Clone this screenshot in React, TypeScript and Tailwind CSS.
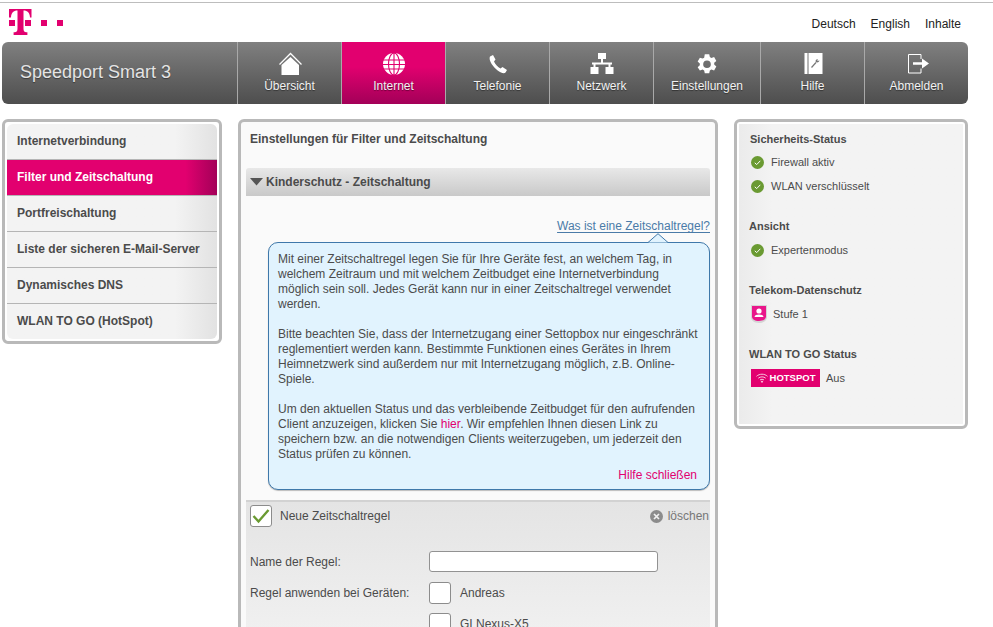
import React from "react";

const navShadow = "[text-shadow:0_1px_1px_rgba(0,0,0,0.45)]";

function HomeIcon() {
  return (
    <svg width="24" height="24" viewBox="0 0 24 24" fill="#fff">
      <path d="M3.500 13 12.500 5l8.500 8v10H3.500z" />
      <path d="M1.500 12.500 12.500 1.500l11 11" fill="none" stroke="#fff" strokeWidth="1.300" />
    </svg>
  );
}
function GlobeIcon() {
  return (
    <svg width="24" height="24" viewBox="0 0 24 24">
      <circle cx="12" cy="12" r="11" fill="#fff" />
      <g stroke="#e2006f" strokeWidth="1.100" fill="none">
        <path d="M1 8h22M1 12.500h22M1 17h22M12 1v22" />
        <ellipse cx="12" cy="12" rx="5.500" ry="11" />
      </g>
    </svg>
  );
}
function PhoneIcon() {
  return (
    <svg width="24" height="24" viewBox="0 0 24 24" fill="#fff">
      <path d="M4 4.500 7 3l2.500 4.500L8 9.500c1 2.500 4 5.500 6.500 7l2-1.500 4.500 3-1.500 2.500c-1 1-2.500 1-4.500 0C10 18 5.500 13 4 8.500c-.5-1.500-.5-3 0-4z" />
    </svg>
  );
}
function NetworkIcon() {
  return (
    <svg width="24" height="24" viewBox="0 -1 24 24" fill="#fff">
      <rect x="8" y="0" width="8" height="6" />
      <rect x="11" y="6" width="2" height="4" />
      <rect x="2" y="9.500" width="20" height="2" />
      <rect x="3.500" y="11" width="2" height="3.500" />
      <rect x="18.500" y="11" width="2" height="3.500" />
      <rect x="0.500" y="14" width="8" height="7" />
      <rect x="15.500" y="14" width="8" height="7" />
    </svg>
  );
}
function GearIcon() {
  return (
    <svg width="24" height="24" viewBox="-1.500 -1.500 27 27">
      <path
        fillRule="evenodd"
        fill="#fff"
        d="M9.500 1h5l.7 3.200 1.700 1 3.100-1 2.500 4.300-2.400 2.200v2l2.400 2.200-2.500 4.300-3.100-1-1.700 1-.7 3.200h-5l-.7-3.200-1.700-1-3.100 1L1.500 15.600l2.400-2.200v-2L1.500 9.200 4 4.900l3.100 1 1.700-1zM12 8a4.300 4.300 0 1 0 0 8.600A4.300 4.300 0 0 0 12 8z"
      />
    </svg>
  );
}
function HelpIcon() {
  return (
    <svg width="24" height="24" viewBox="0 0 24 24">
      <rect x="3.500" y="1" width="3" height="21" fill="#fff" />
      <rect x="7.500" y="1" width="14" height="21" fill="#fff" />
      <path d="M10.500 15.500 15 10.500" stroke="#777" strokeWidth="1.200" />
      <path d="M14.500 9.500c0-1.500 1-2.500 2.500-2.500l-.8 1.300.8.800 1.300-.8c.2 1.400-1 2.500-2.800 2.200z" fill="#777" />
    </svg>
  );
}
function LogoutIcon() {
  return (
    <svg width="24" height="24" viewBox="0 0 24 24" fill="none">
      <path d="M16 7V2.500H3.500V21H16v-4.500" stroke="#fff" strokeWidth="1" />
      <path d="M8 10.300h9V6.500l7 5-7 5v-3.700H8z" fill="#fff" />
    </svg>
  );
}

const navItems = [
  { label: "Übersicht", w: "w-[104px]", icon: <HomeIcon /> },
  { label: "Internet", w: "w-[104px]", icon: <GlobeIcon />, active: true },
  { label: "Telefonie", w: "w-[104px]", icon: <PhoneIcon /> },
  { label: "Netzwerk", w: "w-[104px]", icon: <NetworkIcon /> },
  { label: "Einstellungen", w: "w-[107px]", icon: <GearIcon /> },
  { label: "Hilfe", w: "w-[104px]", icon: <HelpIcon /> },
  { label: "Abmelden", w: "w-[104px]", icon: <LogoutIcon /> },
];

function CheckDot() {
  return (
    <svg width="13" height="13" viewBox="0 0 13 13" className="shrink-0">
      <circle cx="6.500" cy="6.500" r="6.500" fill="#6a9a32" />
      <path d="M3.800 6.800 5.700 8.600 9.300 4.800" stroke="#fff" strokeWidth="1" fill="none" />
    </svg>
  );
}

function Status({ children }: { children: React.ReactNode }) {
  return (
    <div className="flex items-center h-[24px] pl-[12px] gap-[7px] text-[11px]">
      <CheckDot />
      <span>{children}</span>
    </div>
  );
}

function H({ children, className = "" }: { children: React.ReactNode; className?: string }) {
  return <div className={`font-bold text-[11px] text-[#4b4b4b] leading-[15px] pl-[10px] ${className}`}>{children}</div>;
}

const menu = ["Internetverbindung", "Filter und Zeitschaltung", "Portfreischaltung", "Liste der sicheren E-Mail-Server", "Dynamisches DNS", "WLAN TO GO (HotSpot)"];

export default function App() {
  return (
    <div className="w-[993px] h-[627px] overflow-hidden bg-white text-[12px] text-[#4b4b4b] [font-family:'Liberation_Sans',Arial,sans-serif]">
      <div className="h-[3px] border-b border-[#bdbdbd]" />
      {/* top strip */}
      <div className="h-[39px] w-[968px] flex items-start justify-between">
        <svg width="56" height="28" viewBox="0 0 56 28" className="ml-[9px] mt-[6px]" fill="#e2006f">
          <path d="M0 0h22.500v8.500h-1.500C20.800 4 18.600 1.600 14.500 1.600V19c0 3 .6 4.300 3.600 4.300h.3V26H4.600v-2.700h.3c3 0 3.600-1.300 3.600-4.300V1.600C4.400 1.600 2.200 4 2 8.500H0z" />
          <rect x="0" y="11" width="6" height="6" />
          <rect x="16" y="11" width="6" height="6" />
          <rect x="32" y="11" width="6" height="6" />
          <rect x="48" y="11" width="6" height="6" />
        </svg>
        <div className="flex gap-[15px] mt-[14px] mr-[7px] text-[#222] leading-[14px]">
          <span>Deutsch</span>
          <span>English</span>
          <span>Inhalte</span>
        </div>
      </div>
      {/* nav */}
      <div className="ml-[2px] w-[966px] h-[62px] flex rounded-[6px] overflow-hidden bg-gradient-to-b from-[#808080] to-[#4e4e4e]">
        <div className="w-[235px] flex items-center pl-[18px] pb-[2px] text-[18px] text-[#e4e4e4] [text-shadow:0_1px_1px_rgba(0,0,0,0.4)]">Speedport Smart 3</div>
        {navItems.map((n) => (
          <div
            key={n.label}
            className={`${n.w} flex flex-col items-center border-l border-[#a9a9a9] pt-[10px] ${n.active ? "bg-gradient-to-b from-[#e2006f] from-40% to-[#a30058]" : ""}`}
          >
            <div className="h-[25px] flex items-start justify-center">{n.icon}</div>
            <div className={`mt-[2px] leading-[14px] text-[#f2f2f2] ${navShadow}`}>{n.label}</div>
          </div>
        ))}
      </div>
      {/* columns */}
      <div className="flex items-start mt-[15px] ml-[2px]">
        {/* left */}
        <div className="w-[220px] h-[225px] shrink-0 border-[3px] border-[#b9b9b9] rounded-[6px] p-[2px] bg-white">
          <div className="h-full rounded-[6px] overflow-hidden bg-gradient-to-r from-[#f3f3f3] from-80% to-[#e2e2e2]">
            {menu.map((m, i) => (
              <div
                key={m}
                className={`h-[36px] flex items-center pl-[10px] pb-[2px] font-bold ${i === 1 ? "bg-gradient-to-r from-[#e2006f] from-85% to-[#a30058] text-white" : ""} ${i < 5 ? "border-b border-[#b5b5b5]" : ""}`}
              >
                {m}
              </div>
            ))}
          </div>
        </div>
        {/* main */}
        <div className="ml-[16px] w-[480px] h-[600px] shrink-0 border-[3px] border-b-0 border-[#b9b9b9] rounded-t-[6px] bg-[#fafafa] px-[5px]">
          <div className="pl-[4px] pt-[10px] h-[46px] font-bold leading-[15px]">Einstellungen für Filter und Zeitschaltung</div>
          <div className="h-[28px] flex items-center rounded-t-[3px] bg-gradient-to-b from-[#e8e8e8] to-[#c9c9c9] pl-[4px] font-bold">
            <svg width="13" height="8" viewBox="0 0 13 8" className="mr-[3px]">
              <path d="M0 0h13L6.500 7.500z" fill="#555" />
            </svg>
            Kinderschutz - Zeitschaltung
          </div>
          <div className="mt-[23px] h-[15px] leading-[15px] text-right text-[#4a7ba8] underline underline-offset-2">Was ist eine Zeitschaltregel?</div>
          <div className="relative mt-[8px] ml-[22px] w-[442px] h-[248px] rounded-[10px] border border-[#3f78aa] bg-[#e1f3fe] shadow-[0_1px_1px_rgba(0,0,0,0.25)] pl-[9px] pr-[7px] pt-[9px] leading-[15px]">
            <svg width="20" height="10" viewBox="0 0 20 10" className="absolute top-[-10px] right-[41px]">
              <path d="M0 9.500 10 .7l10 8.800" fill="#e1f3fe" stroke="#3f78aa" />
            </svg>
            <p>
              Mit einer Zeitschaltregel legen Sie für Ihre Geräte fest, an welchem Tag, in welchem Zeitraum und mit welchem Zeitbudget eine Internetverbindung möglich sein soll. Jedes Gerät kann nur in einer Zeitschaltregel verwendet werden.
            </p>
            <p className="mt-[15px]">
              Bitte beachten Sie, dass der Internetzugang einer Settopbox nur eingeschränkt reglementiert werden kann. Bestimmte Funktionen eines Gerätes in Ihrem Heimnetzwerk sind außerdem nur mit Internetzugang möglich, z.B. Online-Spiele.
            </p>
            <p className="mt-[15px]">
              Um den aktuellen Status und das verbleibende Zeitbudget für den aufrufenden Client anzuzeigen, klicken Sie <span className="text-[#e2006f]">hier</span>. Wir empfehlen Ihnen diesen Link zu speichern bzw. an die notwendigen Clients weiterzugeben, um jederzeit den Status prüfen zu können.
            </p>
            <div className="mt-[6px] pr-[5px] text-right text-[#e2006f]">Hilfe schließen</div>
          </div>
          <div className="mt-[10px] h-[130px] border-t-2 border-[#d2d2d2] bg-gradient-to-b from-[#e4e4e4] to-[#f0f0f0] pl-[4px] pr-[1px] pt-[3px]">
            <div className="flex items-center h-[22px]">
              <div className="w-[22px] h-[22px] rounded-[3px] border border-[#8c8c8c] bg-white flex items-center justify-center">
                <svg width="18" height="16" viewBox="0 0 18 16">
                  <path d="M1.500 8 6.500 13.500 16.500 2" stroke="#6a9a32" strokeWidth="2.400" fill="none" />
                </svg>
              </div>
              <span className="ml-[8px]">Neue Zeitschaltregel</span>
              <svg width="13" height="13" viewBox="0 0 13 13" className="ml-auto">
                <circle cx="6.500" cy="6.500" r="6.500" fill="#8c8c8c" />
                <path d="M4 4l5 5M9 4l-5 5" stroke="#f0f0f0" strokeWidth="1.700" />
              </svg>
              <span className="ml-[5px] text-[#777]">löschen</span>
            </div>
            <div className="flex items-center mt-[24px] h-[21px]">
              <span className="w-[179px]">Name der Regel:</span>
              <div className="w-[229px] h-[21px] rounded-[3px] border border-[#929292] bg-white" />
            </div>
            <div className="flex items-center mt-[10px] h-[22px]">
              <span className="w-[179px]">Regel anwenden bei Geräten:</span>
              <div className="w-[22px] h-[22px] rounded-[3px] border border-[#8c8c8c] bg-white" />
              <span className="ml-[9px]">Andreas</span>
            </div>
            <div className="flex items-center mt-[9px] h-[22px]">
              <span className="w-[179px]" />
              <div className="w-[22px] h-[22px] rounded-[3px] border border-[#8c8c8c] bg-white" />
              <span className="ml-[9px]">GI Nexus-X5</span>
            </div>
          </div>
        </div>
        {/* right */}
        <div className="ml-[16px] w-[234px] h-[310px] shrink-0 border-[3px] border-[#b9b9b9] rounded-[6px] p-[2px] bg-white">
          <div className="h-full bg-gradient-to-r from-[#ebebeb] from-0% via-[#f3f3f3] via-15% to-[#f3f3f3] pt-[8px]">
            <H className="pl-[11px]">Sicherheits-Status</H>
            <div className="mt-[3px]">
              <Status>Firewall aktiv</Status>
              <Status>WLAN verschlüsselt</Status>
            </div>
            <H className="mt-[21px]">Ansicht</H>
            <div className="mt-[4px]">
              <Status>Expertenmodus</Status>
            </div>
            <H className="mt-[21px]">Telekom-Datenschutz</H>
            <div className="flex items-center h-[24px] pl-[12px] gap-[6px] mt-[4px] text-[11px]">
              <svg width="16" height="18" viewBox="0 0 16 18" className="shrink-0">
                <path d="M0 0h16v12c0 3-3 6-8 6s-8-3-8-6z" fill="#d5d5d5" />
                <path d="M1 1h14v10.500c0 2.500-2.500 4.500-7 4.500s-7-2-7-4.500z" fill="#e9168a" />
                <circle cx="8" cy="6" r="2.600" fill="#fff" />
                <path d="M3.500 12c.3-2 2-2.600 4.500-2.600s4.200.6 4.500 2.600z" fill="#fff" />
              </svg>
              <span>Stufe 1</span>
            </div>
            <H className="mt-[21px]">WLAN TO GO Status</H>
            <div className="flex items-center pl-[12px] mt-[7px] text-[11px]">
              <div className="w-[69px] h-[18px] bg-[#e2006f] flex items-center justify-center gap-[2px] text-white font-bold text-[9.5px]">
                <svg width="12" height="10" viewBox="0 0 12 10" fill="none" stroke="#fff" strokeWidth="0.900" opacity="0.85">
                  <path d="M.5 3.300c3-2.800 8-2.800 11 0M2.300 5.200c2-1.800 5.400-1.800 7.400 0M4 7c1.100-.9 2.900-.9 4 0" />
                  <circle cx="6" cy="8.700" r=".6" fill="#fff" />
                </svg>
                HOTSPOT
              </div>
              <span className="ml-[6px]">Aus</span>
            </div>
          </div>
        </div>
      </div>
    </div>
  );
}
